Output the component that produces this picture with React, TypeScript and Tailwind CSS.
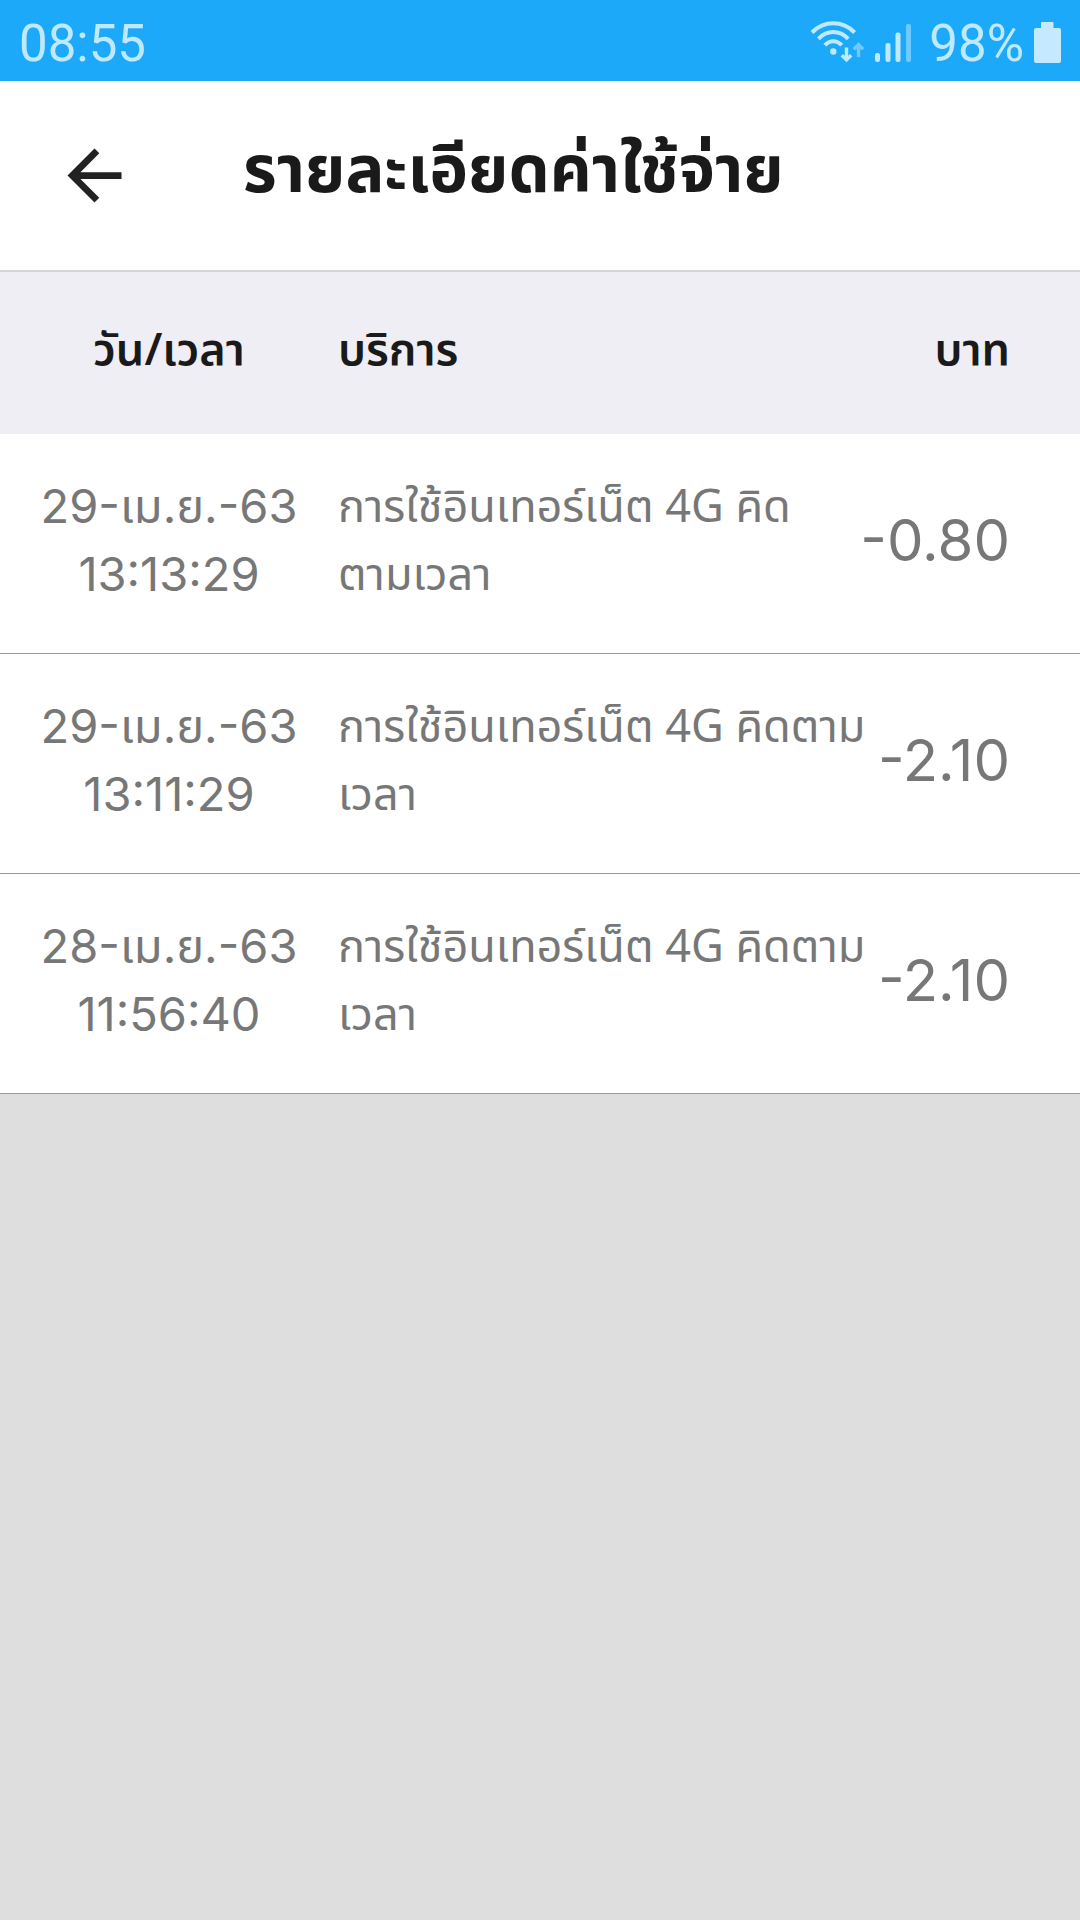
type Expense = {
  id: number;
  date: string;
  time: string;
  service: string;
  amount: string;
};

const EXPENSES: Expense[] = [
  { id: 1, date: '29-เม.ย.-63', time: '13:13:29', service: 'การใช้อินเทอร์เน็ต 4G คิดตามเวลา', amount: '-0.80' },
  { id: 2, date: '29-เม.ย.-63', time: '13:11:29', service: 'การใช้อินเทอร์เน็ต 4G คิดตามเวลา', amount: '-2.10' },
  { id: 3, date: '28-เม.ย.-63', time: '11:56:40', service: 'การใช้อินเทอร์เน็ต 4G คิดตามเวลา', amount: '-2.10' },
];

function WifiIcon() {
  return (
    <svg width="56" height="44" viewBox="0 0 56 44" fill="none" aria-hidden="true">
      <g stroke="#bfe9ff" strokeWidth="4">
        <path d="M3 13.5C15 1.2 33.6 1.2 45.6 13.5" />
        <path d="M9.4 19.8C18 10.8 30.6 10.8 39.2 19.8" />
        <path d="M15.8 26.2C20.8 20.8 27.8 20.8 32.8 26.2" />
      </g>
      <circle cx="24.3" cy="32.5" r="3.2" fill="#bfe9ff" />
      <path d="M37.5 28.500V40M32.8 36.2l4.7 4.7 4.7-4.7" stroke="#bfe9ff" strokeWidth="3.4" />
      <path d="M49.5 38V27M44.8 30.3l4.7-4.7 4.7 4.7" stroke="#6fcbff" strokeWidth="3.4" />
    </svg>
  );
}

function SignalIcon() {
  return (
    <svg width="40" height="44" viewBox="0 0 40 44" aria-hidden="true">
      <g fill="#bfe9ff">
        <rect x="2" y="34" width="5" height="9" rx="2" />
        <rect x="12.5" y="24" width="5" height="19" rx="2" />
        <rect x="22.5" y="13.5" width="5" height="29.5" rx="2" />
      </g>
      <rect x="33" y="5" width="5" height="38" rx="2" fill="#6fcbff" />
    </svg>
  );
}

function BatteryIcon() {
  return (
    <svg width="27" height="44" viewBox="0 0 27 44" fill="#c5e9ff" aria-hidden="true">
      <path d="M8 3h10.500a1 1 0 0 1 1 1v5H25a2 2 0 0 1 2 2v31a2 2 0 0 1-2 2H2a2 2 0 0 1-2-2V11a2 2 0 0 1 2-2h5V4a1 1 0 0 1 1-1z" />
    </svg>
  );
}

function StatusBar() {
  return (
    <div className="flex h-[81px] items-center justify-between bg-[#1ca9f9] px-[19px] font-['Roboto',sans-serif] text-[51px] leading-none text-[#bfe9ff]">
      <span className="pt-[6px]">08:55</span>
      <div className="flex items-center">
        <WifiIcon />
        <div className="ml-2">
          <SignalIcon />
        </div>
        <span className="ml-4 pt-[6px]">98%</span>
        <div className="ml-[10px]">
          <BatteryIcon />
        </div>
      </div>
    </div>
  );
}

function ExpenseRow({ expense }: { expense: Expense }) {
  return (
    <tr className="flex h-[220px] items-center border-b border-[#9a9a9a] bg-white pr-[70px] text-[#777]">
      <td className="w-[338px] shrink-0 pb-2 text-center text-[47px] leading-[68px]">
        <div>{expense.date}</div>
        <div>{expense.time}</div>
      </td>
      <td className="min-w-0 flex-1 pb-1 font-['Noto_Sans_Thai','Noto_Sans',sans-serif] text-[45px] leading-[68px]">
        {expense.service}
      </td>
      <td className="ml-2 shrink-0 pb-2 text-right text-[58px] leading-[68px]">{expense.amount}</td>
    </tr>
  );
}

export default function App() {
  return (
    <div className="min-h-screen bg-[#dedede] font-['Inter','Noto_Sans_Thai','Noto_Sans',sans-serif] text-[#1a1a1a]">
      <StatusBar />

      <header className="flex h-[191px] items-center border-b-2 border-[#d4d4d4] bg-white pl-[54px]">
        <button type="button" aria-label="ย้อนกลับ" className="shrink-0">
          <svg width="81" height="81" viewBox="0 0 24 24" fill="#222" aria-hidden="true">
            <path d="M20 11H7.83l5.59-5.59L12 4l-8 8 8 8 1.41-1.41L7.83 13H20v-2z" />
          </svg>
        </button>
        <h1 className="ml-[108px] pb-2 font-['Noto_Sans_Thai','Noto_Sans',sans-serif] text-[65px] leading-[80px] font-bold">
          รายละเอียดค่าใช้จ่าย
        </h1>
      </header>

      <table className="block w-full">
        <thead className="block">
          <tr className="flex h-[162px] items-center bg-[#efeef4] pr-[70px] font-['Noto_Sans_Thai','Noto_Sans',sans-serif] text-[45px] leading-[68px]">
            <th scope="col" className="w-[338px] shrink-0 pb-1 text-center font-semibold">วัน/เวลา</th>
            <th scope="col" className="flex-1 pb-1 text-left font-semibold">บริการ</th>
            <th scope="col" className="shrink-0 pb-1 text-right font-semibold">บาท</th>
          </tr>
        </thead>
        <tbody className="block">
          {EXPENSES.map(expense => (
            <ExpenseRow key={expense.id} expense={expense} />
          ))}
        </tbody>
      </table>
    </div>
  );
}
